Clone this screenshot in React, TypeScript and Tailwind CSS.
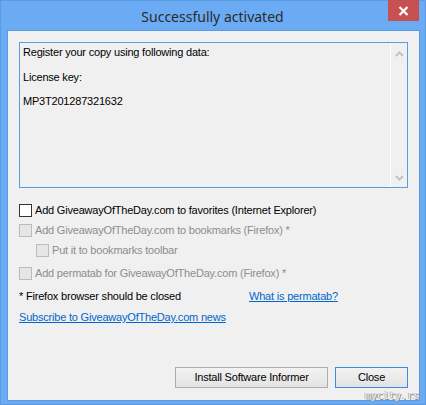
import { useState } from 'react';

const font = { fontFamily: '"Liberation Sans", Arial, sans-serif' };

function Checkbox({
  label,
  checked,
  disabled,
  onChange,
}: {
  label: string;
  checked?: boolean;
  disabled?: boolean;
  onChange?: () => void;
}) {
  return (
    <label
      className={`flex items-center gap-[3px] h-[13px] leading-[13px] ${
        disabled ? 'text-[#8d8d8d]' : 'text-black'
      }`}
    >
      <span
        className={`w-[13px] h-[13px] shrink-0 border flex items-center justify-center ${
          disabled ? 'border-[#bcbcbc] bg-[#e6e6e6]' : 'border-[#333333] bg-white'
        }`}
        onClick={disabled ? undefined : onChange}
      >
        {checked && (
          <svg width="9" height="9" viewBox="0 0 9 9">
            <path d="M1 4.5 L3.5 7 L8 1.5" stroke="#222" strokeWidth="1.6" fill="none" />
          </svg>
        )}
      </span>
      <span className="whitespace-nowrap">{label}</span>
    </label>
  );
}

function Chevron({ up }: { up?: boolean }) {
  return (
    <svg width="9" height="6" viewBox="0 0 9 6">
      <path
        d={up ? 'M1 5 L4.5 1.5 L8 5' : 'M1 1 L4.5 4.5 L8 1'}
        stroke="#c2c2c2"
        strokeWidth="2"
        fill="none"
      />
    </svg>
  );
}

export default function App() {
  const [favorites, setFavorites] = useState(false);

  return (
    <div
      className="relative w-[426px] h-[405px] bg-[#6aabf4] border border-[#5a9ae0] flex flex-col pl-[6px] pr-[5px] pb-[3px] text-[11px] tracking-[-0.2px]"
      style={font}
    >
      <div className="h-[29px] flex items-center justify-center">
        <span
          className="text-[14px] tracking-normal text-[#2b2b2b] -ml-[2px] mt-[1px]"
          style={{ fontFamily: '"Noto Sans", "Open Sans", sans-serif' }}
        >
          Successfully activated
        </span>
      </div>
      <button className="absolute left-[387px] -top-px w-[31px] h-[21px] bg-[#c75050] flex items-center justify-center">
        <svg width="11" height="10" viewBox="0 0 11 10">
          <path d="M1.5 1 L9.5 9 M9.5 1 L1.5 9" stroke="white" strokeWidth="2.2" />
        </svg>
      </button>

      <div className="flex-1 bg-[#f0f0f0] border border-[#5b9be4] flex flex-col px-[11px] pt-[11px] pb-[12px]">
        <div className="h-[146px] border border-[#569de5] flex">
          <div className="flex-1 pl-[3px] pt-[3px] text-black">
            <div className="leading-[13px]">Register your copy using following data:</div>
            <div className="leading-[13px] mt-[11.5px]">License key:</div>
            <div className="leading-[13px] mt-[11.5px]">MP3T201287321632</div>
          </div>
          <div className="w-[17px] border-l border-white flex flex-col items-center justify-between pt-[8px] pb-[6px]">
            <Chevron up />
            <Chevron />
          </div>
        </div>

        <div className="mt-[16px]">
          <Checkbox
            label="Add GiveawayOfTheDay.com to favorites (Internet Explorer)"
            checked={favorites}
            onChange={() => setFavorites(!favorites)}
          />
        </div>
        <div className="mt-[7px]">
          <Checkbox label="Add GiveawayOfTheDay.com to bookmarks (Firefox) *" disabled />
        </div>
        <div className="mt-[7px] ml-[17px]">
          <Checkbox label="Put it to bookmarks toolbar" disabled />
        </div>
        <div className="mt-[10px]">
          <Checkbox label="Add permatab for GiveawayOfTheDay.com (Firefox) *" disabled />
        </div>

        <div className="mt-[10px] flex leading-[13px]">
          <span className="w-[230px] text-black">* Firefox browser should be closed</span>
          <a className="text-[#0066cc] underline">What is permatab?</a>
        </div>
        <div className="mt-[8px] leading-[13px]">
          <a className="text-[#0066cc] underline">Subscribe to GiveawayOfTheDay.com news</a>
        </div>

        <div className="mt-auto flex justify-end gap-[7px]">
          <button className="w-[153px] h-[21px] border border-[#adadad] bg-gradient-to-b from-[#f2f2f2] to-[#e3e3e3] text-black">
            Install Software Informer
          </button>
          <button className="w-[73px] h-[21px] border border-[#3c8ce6] bg-gradient-to-b from-[#f2f2f2] to-[#e3e3e3] text-black">
            Close
          </button>
        </div>
      </div>

      <div
        className="absolute left-[364px] top-[389px] text-[10px] tracking-[0px] text-[#e6e6e6] leading-[11px] whitespace-nowrap"
        style={{
          fontFamily: '"DejaVu Sans Mono", monospace',
          textShadow: '1px 1px 0 #8a8a8a, -1px 0 0 #b0b0b0',
        }}
      >
        mycity.rs
      </div>
    </div>
  );
}
